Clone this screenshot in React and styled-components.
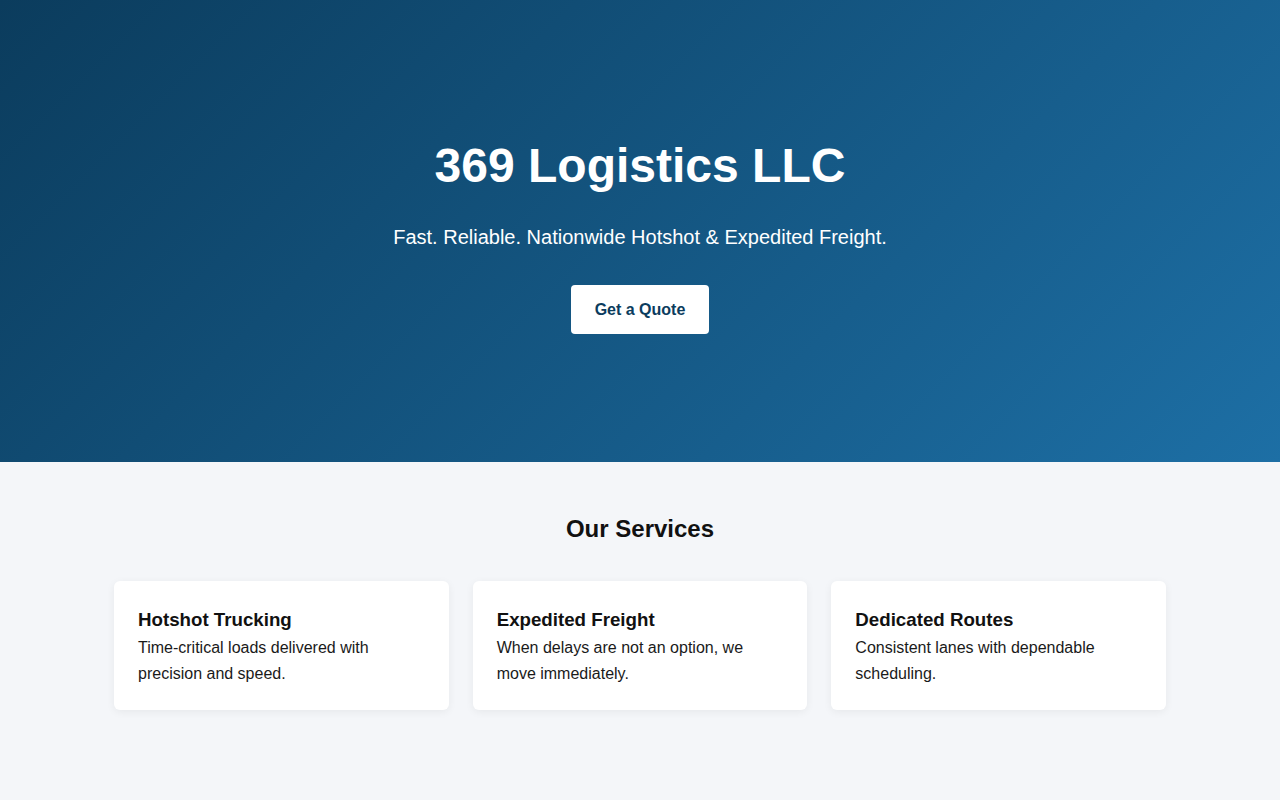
import styled, { createGlobalStyle } from "styled-components";

const services = [
    {
        title: "Hotshot Trucking",
        text: "Time-critical loads delivered with precision and speed.",
    },
    {
        title: "Expedited Freight",
        text: "When delays are not an option, we move immediately.",
    },
    {
        title: "Dedicated Routes",
        text: "Consistent lanes with dependable scheduling.",
    },
];

export default function App() {
    return (
        <>
            <GlobalStyle />
            <Hero>
                <H1>369 Logistics LLC</H1>
                <Tagline>Fast. Reliable. Nationwide Hotshot &amp; Expedited Freight.</Tagline>
                <QuoteButton>Get a Quote</QuoteButton>
            </Hero>
            <Services>
                <H2>Our Services</H2>
                <Grid>
                    {services.map((s) => (
                        <Card key={s.title}>
                            <CardTitle>{s.title}</CardTitle>
                            <CardText>{s.text}</CardText>
                        </Card>
                    ))}
                </Grid>
            </Services>
        </>
    );
}

const GlobalStyle = createGlobalStyle`
    * {
        box-sizing: border-box;
    }
    body {
        margin: 0;
        font-family: "Liberation Sans", Arial, sans-serif;
        background: #f4f6f9;
        color: #111;
    }
`;

const Hero = styled.header`
    height: 462px;
    padding: 138px 20px 0;
    display: flex;
    flex-direction: column;
    align-items: center;
    text-align: center;
    color: #ffffff;
    background: linear-gradient(135deg, #0b3c5d, #1d6fa5);
`;

const H1 = styled.h1`
    margin: 0;
    font-size: 48px;
    line-height: 55px;
    font-weight: 700;
`;

const Tagline = styled.p`
    margin: 33px 0 0;
    font-size: 20px;
    line-height: 23px;
`;

const QuoteButton = styled.button`
    margin-top: 36px;
    width: 138px;
    height: 49px;
    border: none;
    border-radius: 4px;
    background: #ffffff;
    color: #0b3c5d;
    font-family: "Liberation Sans", Arial, sans-serif;
    font-size: 16px;
    font-weight: 700;
    cursor: pointer;
`;

const Services = styled.section`
    min-height: 338px;
    padding: 53px 20px 60px;
    background: #f4f6f9;
`;

const H2 = styled.h2`
    margin: 0 0 38px;
    text-align: center;
    font-size: 24px;
    line-height: 28px;
    font-weight: 700;
    color: #111;
`;

const Grid = styled.div`
    width: 1052px;
    margin: 0 auto;
    display: grid;
    grid-template-columns: repeat(3, 1fr);
    gap: 24px;
`;

const Card = styled.div`
    background: #ffffff;
    border-radius: 6px;
    padding: 24px;
    box-shadow: 0 2px 8px rgba(0, 0, 0, 0.06);
`;

const CardTitle = styled.h3`
    margin: 0;
    font-size: 18.72px;
    line-height: 30px;
    font-weight: 700;
    color: #111;
`;

const CardText = styled.p`
    margin: 0;
    font-size: 16px;
    line-height: 25.6px;
    color: #1a1a1a;
`;
